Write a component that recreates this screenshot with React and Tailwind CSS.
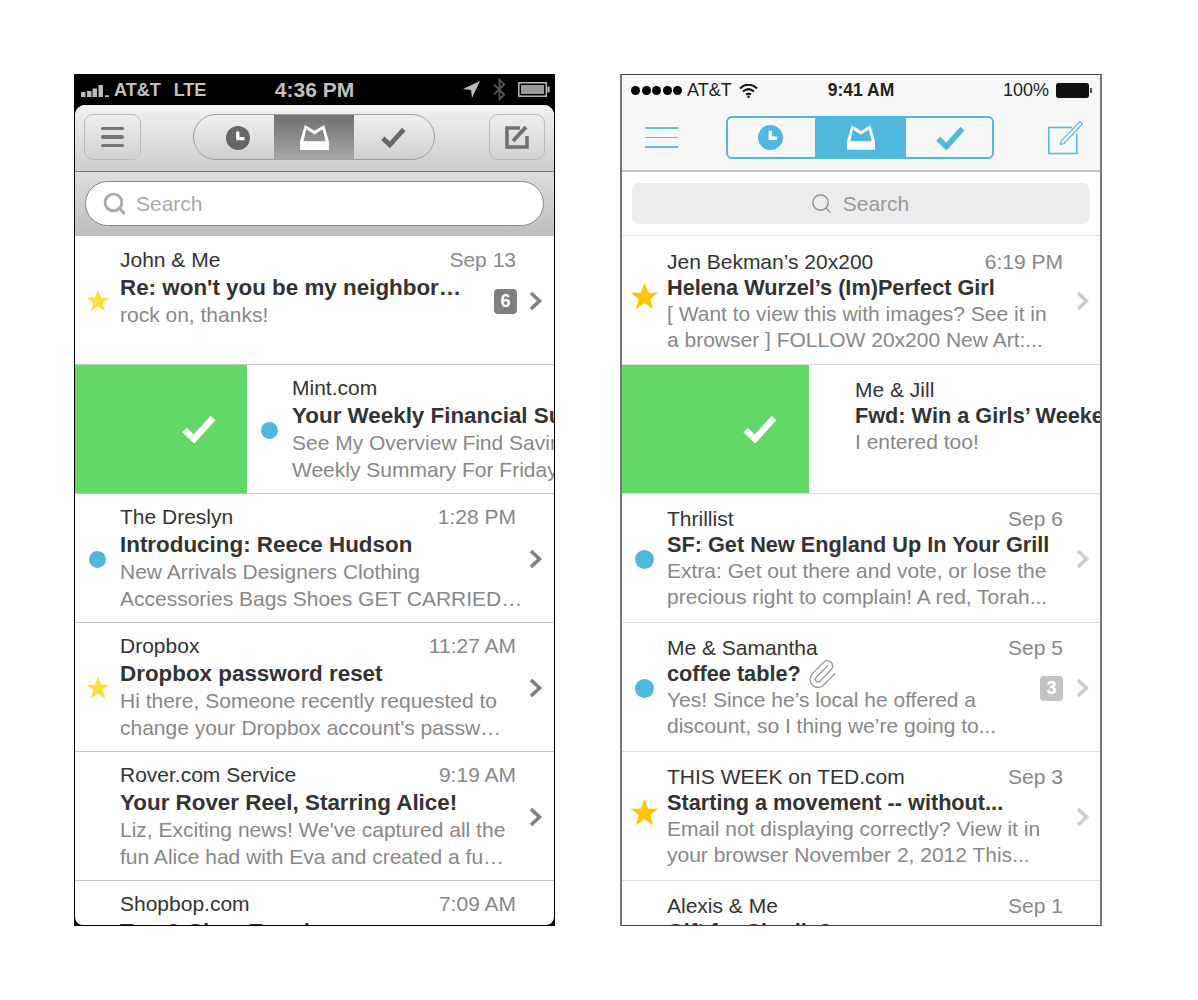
import React from 'react';
import { Paperclip, Search } from 'lucide-react';

const oldRows = [
  { sender: 'John & Me', date: 'Sep 13', title: "Re: won't you be my neighbor…", lines: ['rock on, thanks!'], mark: 'star', badge: '6' },
  { sender: 'Mint.com', title: 'Your Weekly Financial Summary', lines: ['See My Overview Find Savings', 'Weekly Summary For Friday'], mark: 'dot', swipe: true },
  { sender: 'The Dreslyn', date: '1:28 PM', title: 'Introducing: Reece Hudson', lines: ['New Arrivals Designers Clothing', 'Accessories Bags Shoes GET CARRIED…'], mark: 'dot' },
  { sender: 'Dropbox', date: '11:27 AM', title: 'Dropbox password reset', lines: ['Hi there, Someone recently requested to', "change your Dropbox account's passw…"], mark: 'star' },
  { sender: 'Rover.com Service', date: '9:19 AM', title: 'Your Rover Reel, Starring Alice!', lines: ["Liz, Exciting news! We've captured all the", 'fun Alice had with Eva and created a fu…'] },
  { sender: 'Shopbop.com', date: '7:09 AM', title: 'Top & Shoe Trends', lines: [] },
];

const newRows = [
  { sender: 'Jen Bekman’s 20x200', date: '6:19 PM', title: 'Helena Wurzel’s (Im)Perfect Girl', lines: ['[ Want to view this with images? See it in', 'a browser ] FOLLOW 20x200 New Art:...'], mark: 'star' },
  { sender: 'Me & Jill', title: 'Fwd: Win a Girls’ Weekend', lines: ['I entered too!'], swipe: true },
  { sender: 'Thrillist', date: 'Sep 6', title: 'SF: Get New England Up In Your Grill', lines: ['Extra: Get out there and vote, or lose the', 'precious right to complain! A red, Torah...'], mark: 'dot' },
  { sender: 'Me & Samantha', date: 'Sep 5', title: 'coffee table?', clip: true, lines: ['Yes! Since he’s local he offered a', 'discount, so I thing we’re going to...'], mark: 'dot', badge: '3' },
  { sender: 'THIS WEEK on TED.com', date: 'Sep 3', title: 'Starting a movement -- without...', lines: ['Email not displaying correctly? View it in', 'your browser November 2, 2012 This...'], mark: 'star' },
  { sender: 'Alexis & Me', date: 'Sep 1', title: 'Gift for Charlie?', lines: [] },
];

const Star = ({ size, color, className }) => (
  <svg width={size} height={size} viewBox="0 0 24 24" fill={color} className={className}>
    <path d="M12 .8l3.1 8h8.4l-6.8 5.2 2.5 8.6L12 17.5l-7.2 5.1 2.5-8.6L.5 8.8h8.4z" />
  </svg>
);

const Chevron = ({ color }) => (
  <svg width="14" height="20" viewBox="0 0 14 20" fill="none" stroke={color} strokeWidth="3.6" className="translate-y-px">
    <path d="M2 2l8.5 8L2 18" />
  </svg>
);

const Check = ({ color, w = 34, h = 28 }) => (
  <svg width={w} height={h} viewBox="0 0 34 28" fill="none" stroke={color} strokeWidth="6.5">
    <path d="M2.5 15l9.5 9L31 3" />
  </svg>
);

const Clock = ({ color, size, className }) => (
  <svg width={size} height={size} viewBox="0 0 26 26" className={className}>
    <circle cx="13" cy="13" r="13" fill={color} />
    <path d="M11 6h3.5v6H20v3.5h-9z" fill="#fff" />
  </svg>
);

const Tray = ({ w, h }) => (
  <svg width={w} height={h} viewBox="0 0 30 26" fill="#fff">
    <path
      fillRule="evenodd"
      d="M5 0l10 6 10-6 5 17v9H0v-9zM6.5 4.500L3.500 17h23l-3-12.500L15 10z"
    />
  </svg>
);

const Row = ({ row, first, accent, star, starShift, chevron, badgeColor, swipeWidth, swipeShift, width, rightCol, topPad, firstPad, rowClass, titleSize, titleShift, senderLead, titleLead, lineLead, dotSize, starSize, last }) => (
  <div className={`flex shrink-0 overflow-hidden ${rowClass}`}>
    {row.swipe && (
      <div className={`flex shrink-0 items-center justify-end bg-[#62d967] ${swipeWidth}`}>
        <Check color="#fff" />
      </div>
    )}
    <div className={`relative flex h-full shrink-0 items-center ${width} ${row.swipe ? swipeShift : ''}`}>
      <div className="flex w-[45px] shrink-0 justify-center">
        {row.mark === 'star' && <Star size={starSize} color={star} className={starShift} />}
        {row.mark === 'dot' && <div className={`translate-y-px rounded-full ${dotSize}`} style={{ backgroundColor: accent }} />}
      </div>
      <div className={`min-w-0 flex-1 self-start whitespace-nowrap ${first ? firstPad : topPad}`}>
        <div className={`flex justify-between text-[21px] ${senderLead}`}>
          <span className="text-[#333]">{row.sender}</span>
          <span className="text-[#888]">{row.date}</span>
        </div>
        <div className={`flex items-center gap-[5px] font-bold text-[#333] ${titleSize} ${titleLead} ${titleShift}`}>
          {row.title}
          {row.clip && <Paperclip size={32} strokeWidth={1} color="#999" className="-my-[6px]" />}
        </div>
        {row.lines.map((line) => (
          <div key={line} className={`text-[21px] text-[#888] ${lineLead}`}>{line}</div>
        ))}
      </div>
      <div className={`flex shrink-0 justify-center pl-[2px] ${rightCol}`}>
        {!row.swipe && !last && <Chevron color={chevron} />}
      </div>
      {row.badge && (
        <div
          className="absolute right-[37px] top-[53px] flex h-[25px] w-[23px] items-center justify-center rounded-[4px] text-[18px] font-bold text-white"
          style={{ backgroundColor: badgeColor }}
        >
          {row.badge}
        </div>
      )}
    </div>
  </div>
);

const OldPhone = () => (
  <div className="flex h-[852px] w-[481px] flex-col overflow-hidden bg-black px-px pb-px">
    <div className="relative flex h-[31px] shrink-0 items-center justify-between pl-[6px] pr-[4px] text-[18px] font-bold text-[#c0c0c0]">
      <div className="flex items-center">
        <svg width="28" height="12" viewBox="0 0 28 12" fill="#bbb" className="mt-[2px]">
          <path d="M0 7h4.500v5H0zM6 6h4.500v6H6zM11.500 3.500H16V12h-4.500zM17.500 0H22v12h-4.500zM24 10.300h4V12h-4z" />
        </svg>
        <span className="ml-[5px] mt-px">AT&amp;T</span>
        <span className="ml-[13px] mt-px">LTE</span>
      </div>
      <span className="absolute left-0 right-0 top-0 text-center text-[21px] leading-[31px]">4:36 PM</span>
      <div className="flex items-center gap-[13px]">
        <svg width="17" height="17" viewBox="0 0 17 17" fill="#bbb"><path d="M17 0L0 8l8 1 1 8z" /></svg>
        <svg width="13" height="23" viewBox="0 0 14 23" fill="none" stroke="#555" strokeWidth="2"><path d="M1 6l11 11-5 5V1l5 5L1 17" /></svg>
        <svg width="32" height="15" viewBox="0 0 32 15" className="-ml-px">
          <rect x=".8" y=".8" width="27.500" height="13.400" fill="none" stroke="#bbb" strokeWidth="1.500" />
          <rect x="3" y="3" width="23" height="9" fill="#999" />
          <rect x="29.500" y="4.500" width="2" height="6" fill="#bbb" />
        </svg>
      </div>
    </div>
    <div className="flex flex-1 flex-col overflow-hidden rounded-b-[8px] rounded-t-[10px] bg-white">
      <div className="flex h-[67px] shrink-0 items-center border-b border-[#777] bg-gradient-to-b from-[#f2f2f2] to-[#cdcdcd] pb-[2px] pl-[9px]">
        <div className="flex h-[46px] w-[57px] flex-col items-center justify-center gap-[5px] rounded-[9px] border border-[#bbb] bg-gradient-to-b from-[#eee] to-[#d2d2d2]">
          <div className="h-[3.500px] w-[23px] rounded-full bg-[#777]" />
          <div className="h-[3.500px] w-[23px] rounded-full bg-[#777]" />
          <div className="h-[3.500px] w-[23px] rounded-full bg-[#777]" />
        </div>
        <div className="ml-[52px] flex h-[46px] w-[242px] overflow-hidden rounded-full border border-[#a0a0a0] bg-gradient-to-b from-[#f0f0f0] to-[#d0d0d0]">
          <div className="flex w-[80px] items-center justify-center pl-[8px]"><Clock color="#666" size={24} className="translate-y-px" /></div>
          <div className="flex w-[80px] items-center justify-center bg-gradient-to-b from-[#6f6f6f] to-[#a6a6a6]"><Tray w={29} h={25} /></div>
          <div className="flex flex-1 items-center justify-center pr-[1px]"><Check color="#666" w={25} h={21} /></div>
        </div>
        <div className="ml-[54px] flex h-[46px] w-[56px] items-center justify-center rounded-[9px] border border-[#bbb] bg-gradient-to-b from-[#eee] to-[#d2d2d2]">
          <svg width="24" height="24" viewBox="0 0 24 24" fill="none" stroke="#707070">
            <path d="M15 3H2v19h20V11" strokeWidth="3.500" />
            <path d="M8 16L21 2" strokeWidth="4" />
          </svg>
        </div>
      </div>
      <div className="flex h-[64px] shrink-0 items-center bg-gradient-to-b from-[#dedede] to-[#bcbdbd] px-[10px] pb-[1px]">
        <div className="flex h-[45px] w-[460px] items-center rounded-full border border-[#888] bg-white pl-[16px] text-[21px] text-[#aaa]">
          <Search size={25} strokeWidth={2.800} color="#aaa" />
          <span className="ml-[9px] mt-px">Search</span>
        </div>
      </div>
      {oldRows.map((row, i) => (
        <Row
          key={row.sender}
          row={row}
          first={i === 0}
          last={i === oldRows.length - 1}
          accent="#4fb6dd"
          star="#ffdc3f"
          starShift="translate-y-px"
          chevron="#808080"
          badgeColor="#808080"
          swipeWidth="w-[172px] pr-[31px]"
          swipeShift=""
          width="w-[479px]"
          rightCol="w-[38px]"
          topPad="pt-[9px]"
          firstPad="pt-[10px]"
          rowClass="h-[129px] border-b border-[#c4c4c4]"
          titleSize="text-[22.400px]"
          titleShift="translate-y-px"
          senderLead="leading-[27px]"
          titleLead="leading-[28px]"
          lineLead="leading-[27px]"
          dotSize="h-[17px] w-[17px]"
          starSize={24}
        />
      ))}
    </div>
  </div>
);

const NewPhone = () => (
  <div className="flex h-[852px] w-[482px] flex-col overflow-hidden border-x-2 border-y border-x-[#777] border-y-[#444] bg-white">
    <div className="shrink-0 border-b-2 border-[#c2c2c2] bg-[#f7f7f7]">
      <div className="relative flex h-[31px] items-center justify-between pl-[9px] pr-[8px] text-[18px] text-[#222]">
        <div className="flex items-center">
          <div className="flex gap-[1.500px]">
            {[0, 1, 2, 3, 4].map((d) => (
              <div key={d} className="h-[9px] w-[9px] rounded-full bg-black" />
            ))}
          </div>
          <span className="ml-[5px]">AT&amp;T</span>
          <svg width="19" height="14" viewBox="0 0 19 14" fill="none" stroke="#111" strokeWidth="2" className="ml-[7px]">
            <path d="M1 4.500C6 -.500 13 -.500 18 4.500M4 7.500c3.500-3 7.500-3 11 0M7 10.500c1.500-1 3.500-1 5 0" />
            <circle cx="9.500" cy="12.800" r="1.200" fill="#111" stroke="none" />
          </svg>
        </div>
        <span className="absolute left-0 right-0 text-center text-[17.500px] font-bold">9:41 AM</span>
        <div className="flex items-center gap-[7px]">
          <span>100%</span>
          <svg width="36" height="15" viewBox="0 0 36 15">
            <rect width="33" height="15" rx="2.500" fill="#111" />
            <rect x="34" y="5" width="2" height="5" fill="#555" />
          </svg>
        </div>
      </div>
      <div className="flex h-[64px] items-center pb-[1px] pl-[23px]">
        <div className="flex w-[33px] flex-col gap-[8px]">
          <div className="h-[1.500px] bg-[#5ac0e0]" />
          <div className="h-[1.500px] bg-[#5ac0e0]" />
          <div className="h-[1.500px] bg-[#5ac0e0]" />
        </div>
        <div className="ml-[48px] flex h-[43px] w-[268px] overflow-hidden rounded-[6px] border-2 border-[#50b8dc]">
          <div className="flex w-[87px] items-center justify-center pr-[2px]"><Clock color="#50b8dc" size={25} /></div>
          <div className="flex w-[91px] items-center justify-center bg-[#50b8dc]"><Tray w={28} h={25} /></div>
          <div className="flex flex-1 items-center justify-center pl-[2px]"><Check color="#50b8dc" w={29} h={24} /></div>
        </div>
        <svg width="36" height="35" viewBox="0 0 36 35" fill="none" stroke="#50b8dc" strokeWidth="1.500" className="ml-[54px]">
          <path d="M24 7.500H.8v26h28V14" />
          <path d="M12.500 24.500l1-4L32 1.500l2.500 2.500L16 23.500z" strokeWidth="1.200" />
        </svg>
      </div>
    </div>
    <div className="flex h-[64px] shrink-0 items-center border-b border-[#e2e2e2] px-[10px]">
      <div className="flex h-[41px] w-full items-center justify-center rounded-[7px] bg-[#ebecee] pr-[3px] text-[21px] text-[#999]">
        <Search size={23} strokeWidth={1.400} color="#888" />
        <span className="ml-[10px]">Search</span>
      </div>
    </div>
    {newRows.map((row, i) => (
      <Row
        key={row.sender}
        row={row}
        first={i === 0}
        last={i === newRows.length - 1}
        accent="#50b8dc"
        star="#ffc600"
        starShift="-translate-y-[4px]"
        chevron="#cccccc"
        badgeColor="#c4c4c4"
        swipeWidth="w-[187px] pr-[32px]"
        swipeShift="ml-px"
        width="w-[478px]"
        rightCol="w-[37px]"
        topPad="pt-[12px]"
        firstPad="pt-[13px]"
        rowClass="h-[129px] border-b border-[#dddddd]"
        titleSize="text-[21.700px]"
        titleShift=""
        senderLead="leading-[26px]"
        titleLead="leading-[26px]"
        lineLead="leading-[26px]"
        dotSize="h-[19px] w-[19px]"
        starSize={29}
      />
    ))}
  </div>
);

export default function App() {
  return (
    <div className="flex h-[1000px] w-[1198px] gap-[65px] overflow-hidden bg-white pl-[74px] pt-[74px] font-['Liberation_Sans',Arial,sans-serif]">
      <OldPhone />
      <NewPhone />
    </div>
  );
}
